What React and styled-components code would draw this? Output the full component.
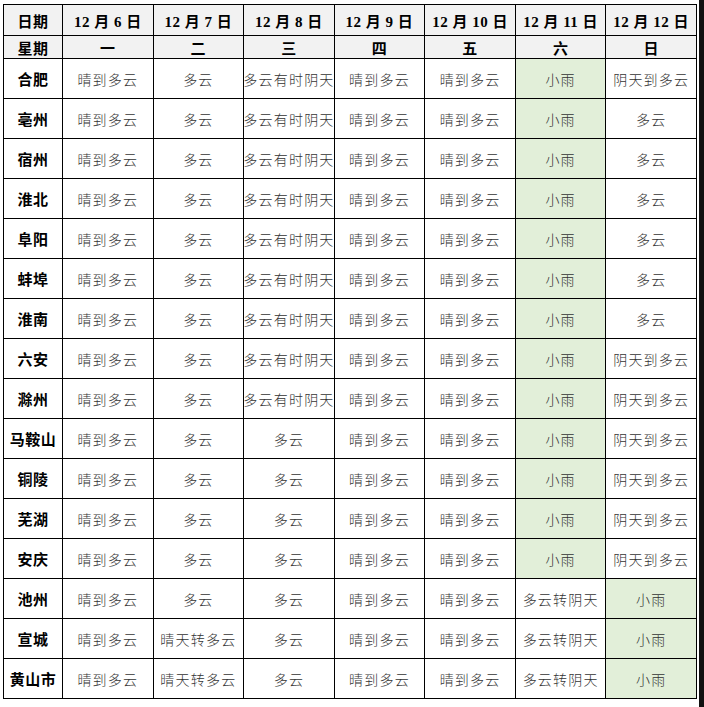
import React from "react";
import styled, { createGlobalStyle } from "styled-components";

const Global = createGlobalStyle`
  html, body { margin: 0; padding: 0; background: #fff; }
  body { font-family: "Noto Sans CJK SC", "Liberation Sans", sans-serif; }
`;

const Page = styled.div`
  width: 704px;
  height: 707px;
  display: flex;
  background: #fff;
`;

const TableArea = styled.div`
  flex: 1;
  padding: 4px 2px 0 3px;
`;

const Strip = styled.div`
  width: 5px;
  background: #111;
`;

const Grid = styled.div`
  display: grid;
  grid-template-columns: 58px repeat(7, 1fr);
  grid-template-rows: 30px 22px repeat(16, 39px);
  gap: 1px;
  padding: 1px;
  background: #000;
  width: 694px;
  box-sizing: border-box;
`;

const Cell = styled.div`
  display: flex;
  align-items: center;
  justify-content: center;
  white-space: nowrap;
  overflow: hidden;
  background: ${(p) => (p.$green ? "#e2efd9" : p.$head ? "#f2f2f2" : "#fff")};
  color: ${(p) => (p.$head || p.$city ? "#000" : "#333")};
  font-family: ${(p) =>
    p.$head
      ? '"Liberation Serif", "Noto Sans CJK SC", serif'
      : '"Noto Sans CJK SC", "Liberation Sans", sans-serif'};
  font-weight: ${(p) => (p.$head || p.$city ? 700 : 300)};
  font-size: ${(p) => (p.$head ? "15px" : p.$city ? "15px" : "14px")};
  letter-spacing: ${(p) => (p.$city ? "0.5px" : p.$head ? "0.5px" : "1.2px")};
`;

const dates = ["12 月 6 日", "12 月 7 日", "12 月 8 日", "12 月 9 日", "12 月 10 日", "12 月 11 日", "12 月 12 日"];
const weeks = ["一", "二", "三", "四", "五", "六", "日"];

const A = ["晴到多云", "多云", "多云有时阴天", "晴到多云", "晴到多云", "小雨"];
const B = ["晴到多云", "多云", "多云", "晴到多云", "晴到多云", "小雨"];

const rows = [
  ["合肥", [...A, "阴天到多云"]],
  ["亳州", [...A, "多云"]],
  ["宿州", [...A, "多云"]],
  ["淮北", [...A, "多云"]],
  ["阜阳", [...A, "多云"]],
  ["蚌埠", [...A, "多云"]],
  ["淮南", [...A, "多云"]],
  ["六安", [...A, "阴天到多云"]],
  ["滁州", [...A, "阴天到多云"]],
  ["马鞍山", [...B, "阴天到多云"]],
  ["铜陵", [...B, "阴天到多云"]],
  ["芜湖", [...B, "阴天到多云"]],
  ["安庆", [...B, "阴天到多云"]],
  ["池州", ["晴到多云", "多云", "多云", "晴到多云", "晴到多云", "多云转阴天", "小雨"]],
  ["宣城", ["晴到多云", "晴天转多云", "多云", "晴到多云", "晴到多云", "多云转阴天", "小雨"]],
  ["黄山市", ["晴到多云", "晴天转多云", "多云", "晴到多云", "晴到多云", "多云转阴天", "小雨"]],
];

export default function App() {
  return (
    <Page>
      <Global />
      <TableArea>
        <Grid>
          <Cell $head>日期</Cell>
          {dates.map((d) => (
            <Cell $head key={d}>{d}</Cell>
          ))}
          <Cell $head>星期</Cell>
          {weeks.map((w) => (
            <Cell $head key={w}>{w}</Cell>
          ))}
          {rows.map(([city, vals]) => (
            <React.Fragment key={city}>
              <Cell $city>{city}</Cell>
              {vals.map((v, i) => (
                <Cell key={i} $green={v === "小雨"}>{v}</Cell>
              ))}
            </React.Fragment>
          ))}
        </Grid>
      </TableArea>
      <Strip />
    </Page>
  );
}
